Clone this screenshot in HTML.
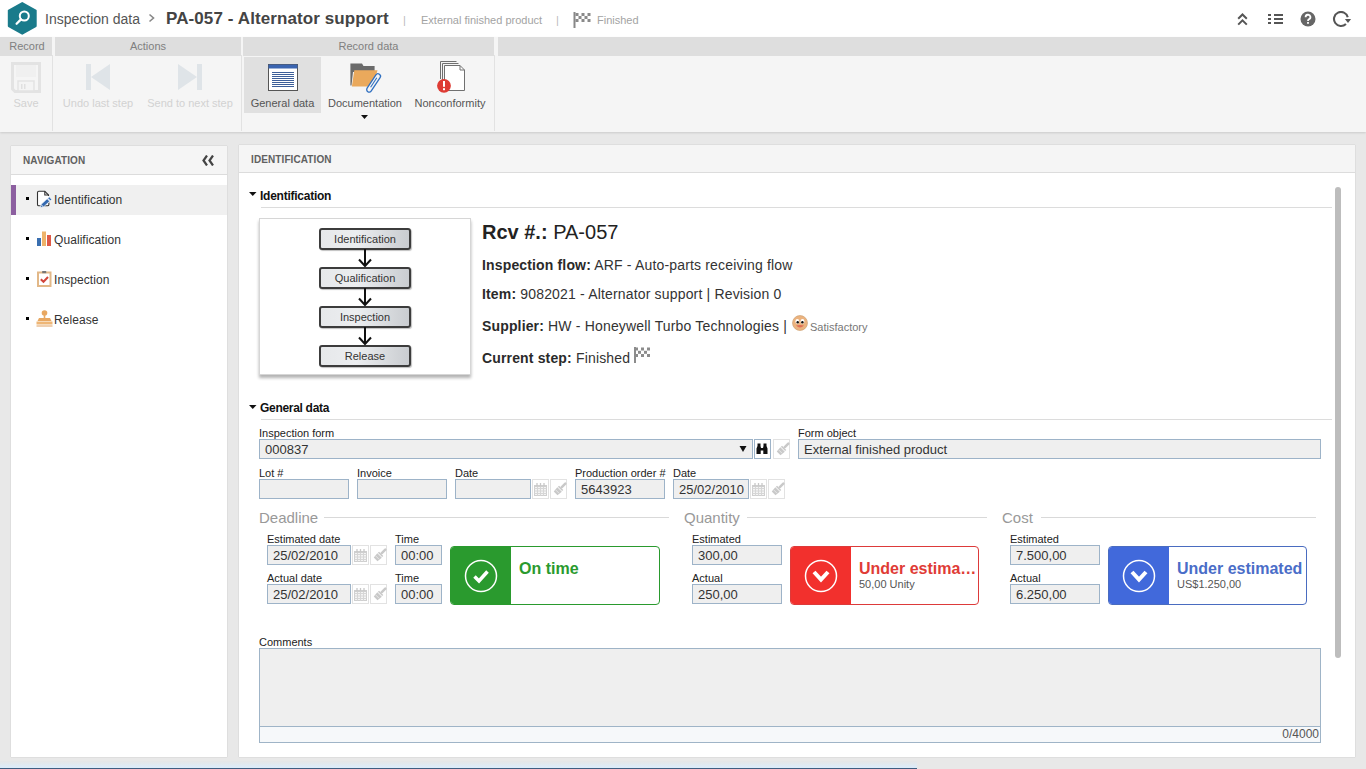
<!DOCTYPE html>
<html><head><meta charset="utf-8">
<style>
*{box-sizing:border-box;margin:0;padding:0}
html,body{width:1366px;height:769px;overflow:hidden;background:#e8e8e8;font-family:"Liberation Sans",sans-serif;color:#333}
.abs{position:absolute}
#hdr{position:absolute;left:0;top:0;width:1366px;height:37px;background:#fff}
#tb{position:absolute;left:0;top:37px;width:1366px;height:95px;background:#f5f5f5;box-shadow:0 1px 2px rgba(0,0,0,0.12)}
.tgh{position:absolute;top:0;height:19px;background:#dedede;color:#808080;font-size:11px;text-align:center;line-height:18px}
.tsep{position:absolute;top:18px;width:1px;height:76px;background:#e2e2e2}
.tbtn{position:absolute;top:18px;height:57px;font-size:11px;text-align:center;color:#444}
.tbtn.dis{color:#c8c8c8}
.panel{position:absolute;background:#fff;box-shadow:0 0 1px rgba(0,0,0,0.25)}
.ph{position:absolute;left:0;top:0;right:0;height:28px;background:#f5f5f5;border-bottom:1px solid #dcdcdc;font-size:10px;font-weight:bold;color:#606060;line-height:28px;padding-left:12px;letter-spacing:0.1px}
.nav{position:absolute;left:0;width:216px;height:30px;font-size:12px;color:#333;line-height:30px}
.nav .b{position:absolute;left:15px;top:12px;width:3px;height:3px;background:#000}
.nav .t{position:absolute;left:43px;top:0;letter-spacing:0.07px}
.lbl{position:absolute;font-size:11px;color:#222}
.inp{position:absolute;height:19px;background:#efefef;border:1px solid #9db3c8;font-size:13px;color:#333;line-height:19px;padding-left:5px}
.sec{position:absolute;font-size:15px;color:#999}
.secl{position:absolute;height:1px;background:#d9d9d9}
.fbox{position:absolute;left:319px;width:92px;height:22px;border:2px solid #3c3c3c;border-radius:3px;background:linear-gradient(90deg,#e6e8ea,#eceef0 40%,#c9ccd0);font-size:11px;color:#333;text-align:center;line-height:19px;box-shadow:1px 1px 1px rgba(0,0,0,0.25)}
.itxt{position:absolute;left:482px;font-size:14px;color:#333;white-space:nowrap;letter-spacing:0.17px}
.itxt b{color:#2a2a2a;letter-spacing:0.15px}
.abtn{position:absolute;width:17px;height:20px;border:1px solid #e2e2e2;background:#fff}
.card{position:absolute;height:59px;border:1px solid;border-radius:4px;background:#fff;overflow:hidden}
.cl{position:absolute;left:0;top:0;bottom:0}
.ct{position:absolute;left:68px;top:13px;font-size:16px;font-weight:bold;white-space:nowrap}
.cs{position:absolute;left:68px;top:31px;font-size:11px;color:#555;white-space:nowrap}
</style></head><body>
<div id="hdr">
  <svg class="abs" style="left:0;top:0" width="45" height="37" viewBox="0 0 45 37">
    <polygon points="22.25,3 35.7,10.6 35.7,26.1 22.25,33.7 8.8,26.1 8.8,10.6" fill="#1a7b8b" stroke="#1a7b8b" stroke-width="2" stroke-linejoin="round"/>
    <circle cx="24.3" cy="16" r="4.5" fill="none" stroke="#fff" stroke-width="2"/>
    <line x1="21" y1="19.4" x2="16.6" y2="23.8" stroke="#fff" stroke-width="2.3" stroke-linecap="round"/>
  </svg>
  <div class="abs" style="left:45px;top:11px;font-size:14px;color:#555">Inspection data</div>
  <svg class="abs" style="left:148px;top:13px" width="8" height="10" viewBox="0 0 8 10"><path d="M1.5,1.5 L5.5,5 L1.5,8.5" fill="none" stroke="#888" stroke-width="1.6"/></svg>
  <div class="abs" style="left:166px;top:9px;font-size:17px;font-weight:bold;color:#444;letter-spacing:0.1px">PA-057 - Alternator support</div>
  <div class="abs" style="left:403px;top:14px;font-size:11px;color:#bbb">|</div>
  <div class="abs" style="left:421px;top:14px;font-size:11px;color:#a3a3a3">External finished product</div>
  <div class="abs" style="left:556px;top:14px;font-size:11px;color:#bbb">|</div>
  <svg class="abs" style="left:573px;top:12px" width="18" height="16" viewBox="0 0 18 16">
    <rect x="0.5" y="0" width="2" height="16" fill="#888"/>
    <g fill="#8a8a8a"><rect x="2.5" y="1" width="3" height="3"/><rect x="8.5" y="1" width="3" height="3"/><rect x="14.5" y="1" width="3" height="3"/>
    <rect x="5.5" y="4" width="3" height="3"/><rect x="11.5" y="4" width="3" height="3"/>
    <rect x="2.5" y="7" width="3" height="3"/><rect x="8.5" y="7" width="3" height="3"/><rect x="14.5" y="7" width="3" height="3"/></g>
  </svg>
  <div class="abs" style="left:597px;top:14px;font-size:11px;color:#a3a3a3">Finished</div>
  <svg class="abs" style="left:1237px;top:12px" width="11" height="14" viewBox="0 0 11 14">
    <path d="M1.2,6.8 L5.5,2.5 L9.8,6.8 M1.2,12.6 L5.5,8.3 L9.8,12.6" fill="none" stroke="#555" stroke-width="2"/>
  </svg>
  <svg class="abs" style="left:1268px;top:14px" width="15" height="10" viewBox="0 0 15 10">
    <g fill="#555"><rect x="0" y="0" width="3" height="2"/><rect x="0" y="4" width="3" height="2"/><rect x="0" y="8" width="3" height="2"/>
    <rect x="6" y="0" width="9" height="2"/><rect x="6" y="4" width="9" height="2"/><rect x="6" y="8" width="9" height="2"/></g>
  </svg>
  <svg class="abs" style="left:1300px;top:11px" width="16" height="16" viewBox="0 0 16 16">
    <circle cx="8" cy="8" r="7.5" fill="#666"/>
    <path d="M5.6,6.2 A2.4,2.4 0 1 1 8.8,8.4 Q8,8.8 8,10" fill="none" stroke="#fff" stroke-width="1.8"/>
    <rect x="7.1" y="11" width="1.8" height="1.8" fill="#fff"/>
  </svg>
  <svg class="abs" style="left:1332px;top:11px" width="20" height="17" viewBox="0 0 20 17">
    <path d="M13.95,12.95 A7,7 0 1 1 15.76,6.19" fill="none" stroke="#555" stroke-width="2.1"/>
    <polygon points="12.9,8 19.1,8 16,12" fill="#555"/>
  </svg>
</div>
<div id="tb">
  <div class="tgh" style="left:0;width:52px;padding-left:2px">Record</div>
  <div class="tgh" style="left:55px;width:186px">Actions</div>
  <div class="tgh" style="left:243px;width:251px">Record data</div>
  <div class="tgh" style="left:498px;width:868px"></div>
  <div class="tsep" style="left:52px"></div>
  <div class="tsep" style="left:241px"></div>
  <div class="tsep" style="left:494px"></div>
  <!-- Save -->
  <svg class="abs" style="left:11px;top:25px" width="30" height="31" viewBox="0 0 30 31">
    <path d="M1.5,1.5 H28.5 V29.5 H4 L1.5,27 Z" fill="none" stroke="#e3e3e3" stroke-width="3"/>
    <rect x="5" y="3" width="20" height="12" fill="#f0f0f0"/>
    <rect x="7" y="19" width="16" height="10" fill="#f4f4f4" stroke="#e3e3e3" stroke-width="1.5"/>
    <rect x="10" y="22" width="1.5" height="5" fill="#e0e0e0"/><rect x="13" y="22" width="1.5" height="5" fill="#e0e0e0"/>
  </svg>
  <div class="abs" style="left:0;width:52px;top:60px;font-size:11px;color:#d2d2d2;text-align:center">Save</div>
  <!-- Undo -->
  <svg class="abs" style="left:86px;top:27px" width="25" height="26" viewBox="0 0 25 26">
    <rect x="0" y="0" width="5" height="26" fill="#dfe4e8"/>
    <polygon points="24,0 24,26 5,13" fill="#dfe4e8"/>
  </svg>
  <div class="abs" style="left:58px;width:80px;top:60px;font-size:11px;color:#d2d2d2;text-align:center">Undo last step</div>
  <svg class="abs" style="left:178px;top:27px" width="24" height="26" viewBox="0 0 24 26">
    <polygon points="0,0 0,26 19,13" fill="#dfe4e8"/>
    <rect x="19" y="0" width="5" height="26" fill="#dfe4e8"/>
  </svg>
  <div class="abs" style="left:143px;width:94px;top:60px;font-size:11px;color:#d2d2d2;text-align:center">Send to next step</div>
  <!-- General data -->
  <div class="abs" style="left:244px;top:20px;width:77px;height:56px;background:#e0e0e0"></div>
  <svg class="abs" style="left:268px;top:27px" width="30" height="27" viewBox="0 0 30 27">
    <rect x="0.5" y="0.5" width="29" height="26" fill="#fff" stroke="#555" stroke-width="1"/>
    <rect x="0.5" y="0.5" width="29" height="4" fill="#3a64b0"/>
    <g fill="#3d5f99"><rect x="4" y="8" width="22" height="1"/><rect x="4" y="10" width="22" height="1"/><rect x="4" y="12" width="22" height="1"/><rect x="4" y="14" width="22" height="1"/><rect x="4" y="16" width="22" height="1"/><rect x="4" y="18" width="22" height="1"/><rect x="4" y="20" width="22" height="1"/><rect x="4" y="22" width="22" height="1"/></g>
  </svg>
  <div class="abs" style="left:244px;width:77px;top:60px;font-size:11px;color:#555;text-align:center">General data</div>
  <!-- Documentation -->
  <svg class="abs" style="left:349px;top:25px" width="34" height="32" viewBox="0 0 34 32">
    <path d="M1.4,1.4 H13 L14.5,4 H25.6 V10 H4 L2.5,23.6 H1.4 Z" fill="#6b6b6b"/>
    <path d="M5.3,8.3 H28.5 L24,24.6 H2.9 Z" fill="#eaa95c"/>
    <path d="M22.29,28.98 L31.09,15.68 A2.5,2.5 0 0 0 26.92,12.92 L18.12,26.22 A2.5,2.5 0 0 0 22.29,28.98 Z" fill="#f5f5f5" stroke="#2f6fc0" stroke-width="1.3"/>
    <path d="M21.6,25.2 L27.8,15.8" fill="none" stroke="#2f6fc0" stroke-width="1.1"/>
  </svg>
  <div class="abs" style="left:323px;width:84px;top:60px;font-size:11px;color:#555;text-align:center">Documentation</div>
  <svg class="abs" style="left:361px;top:78px" width="7" height="4" viewBox="0 0 7 4"><polygon points="0,0 7,0 3.5,4" fill="#111"/></svg>
  <!-- Nonconformity -->
  <svg class="abs" style="left:437px;top:23px" width="30" height="34" viewBox="0 0 30 34">
    <path d="M3.5,19 V1.5 H19.5" fill="none" stroke="#707070" stroke-width="1"/>
    <path d="M5.5,20 V3.5 H21.5" fill="none" stroke="#707070" stroke-width="1"/>
    <path d="M7.5,5.5 H23 L27.5,10 V30.5 H7.5 Z" fill="#fff" stroke="#707070" stroke-width="1"/>
    <path d="M23,5.5 V10 H27.5" fill="none" stroke="#707070" stroke-width="1"/>
    <circle cx="7" cy="25.8" r="6.9" fill="#de3c34"/>
    <rect x="6" y="21" width="2" height="5.8" fill="#fff"/><rect x="6" y="28.2" width="2" height="2" fill="#fff"/>
  </svg>
  <div class="abs" style="left:410px;width:80px;top:60px;font-size:11px;color:#555;text-align:center">Nonconformity</div>
</div>
<div class="panel" style="left:11px;top:146px;width:216px;height:611px">
  <div class="ph" style="height:29px;line-height:29px">NAVIGATION</div>
  <svg class="abs" style="left:191px;top:9px" width="12" height="11" viewBox="0 0 12 11">
    <path d="M5,0.5 L1.5,5.5 L5,10.5 M11,0.5 L7.5,5.5 L11,10.5" fill="none" stroke="#444" stroke-width="2.2"/>
  </svg>
  <div class="nav" style="top:39px;background:#f0f0f0"><div class="abs" style="left:0;top:0;width:5px;height:30px;background:#8c5fa0"></div><div class="b"></div><div class="t">Identification</div>
    <svg class="abs" style="left:25px;top:5px" width="18" height="18" viewBox="0 0 18 18">
      <path d="M12.9,12.5 V14.5 Q12.9,15.8 11.6,15.8 H2.8 Q1.5,15.8 1.5,14.5 V2.6 Q1.5,1.3 2.8,1.3 H8.8 L12.5,5 V6" fill="#fff" stroke="#333" stroke-width="1.1"/>
      <path d="M8.8,1.3 V5 H12.5" fill="none" stroke="#333" stroke-width="1.1"/>
      <g stroke="#f4f8fc" stroke-width="0.7" transform="translate(-0.7,0.9)">
      <polygon points="8.12,16.21 14.32,10.41 11.88,7.79 5.68,13.59" fill="#3469b0"/>
      <polygon points="5.68,13.59 8.12,16.21 5.07,16.6" fill="#3469b0"/>
      <polygon points="14.92,9.88 16.39,8.51 13.95,5.89 12.48,7.26" fill="#3469b0"/>
      </g>
    </svg></div>
  <div class="nav" style="top:79px"><div class="b"></div><div class="t">Qualification</div>
    <svg class="abs" style="left:26px;top:5px" width="15" height="16" viewBox="0 0 15 16">
      <rect x="0" y="8" width="4" height="8" fill="#3a6fb0"/>
      <rect x="5" y="1.5" width="4" height="14.5" fill="#eeb36a"/>
      <rect x="10" y="5" width="4" height="11" fill="#de5a48"/>
    </svg></div>
  <div class="nav" style="top:119px"><div class="b"></div><div class="t">Inspection</div>
    <svg class="abs" style="left:26px;top:5px" width="15" height="17" viewBox="0 0 15 17">
      <rect x="1" y="2.5" width="12.5" height="13.5" fill="#fff" stroke="#e2b888" stroke-width="2"/>
      <rect x="5.2" y="1" width="4" height="2.2" fill="#777"/>
      <path d="M3.8,9.2 L6.5,11.8 L11,7" fill="none" stroke="#d2463c" stroke-width="2"/>
    </svg></div>
  <div class="nav" style="top:159px"><div class="b"></div><div class="t">Release</div>
    <svg class="abs" style="left:25px;top:5px" width="17" height="17" viewBox="0 0 17 17">
      <circle cx="8.5" cy="3" r="2.8" fill="#e8a862"/>
      <rect x="7.7" y="5" width="1.6" height="3.5" fill="#e8a862"/>
      <path d="M3,8 H14 L15.5,11 H1.5 Z" fill="#e8a862"/>
      <rect x="0.5" y="11.5" width="16" height="3" fill="#eeb676"/>
      <rect x="0.5" y="15.5" width="16" height="1" fill="#e0a060"/>
    </svg></div>
</div>
<div class="panel" style="left:239px;top:145px;width:1116px;height:612px">
  <div class="ph" style="height:28px;line-height:30px">IDENTIFICATION</div>
</div>
<div id="main">
  <!-- scrollbar -->
  <div class="abs" style="left:1335px;top:187px;width:6px;height:471px;background:#bdbdbd;border-radius:3px"></div>
  <!-- Identification section -->
  <svg class="abs" style="left:249px;top:192px" width="8" height="4" viewBox="0 0 8 4"><polygon points="0,0 7.5,0 3.75,4" fill="#111"/></svg>
  <div class="abs" style="left:260px;top:189px;font-size:12px;font-weight:bold;color:#111;letter-spacing:-0.25px">Identification</div>
  <div class="abs" style="left:261px;top:207px;width:1071px;height:1px;background:#dcdcdc"></div>
  <!-- diagram -->
  <div class="abs" style="left:259px;top:218px;width:212px;height:157px;background:#fff;border:1px solid #d6d6d6;box-shadow:0 3px 3px rgba(0,0,0,0.3)"></div>
  <div class="fbox" style="top:228px">Identification</div>
  <div class="fbox" style="top:267px">Qualification</div>
  <div class="fbox" style="top:306px">Inspection</div>
  <div class="fbox" style="top:345px">Release</div>
  <svg class="abs" style="left:357px;top:249px" width="16" height="100" viewBox="0 0 16 100">
    <g fill="none" stroke="#111" stroke-width="2">
      <path d="M8,0 V17 M2,10.5 L8,17 L14,10.5"/>
      <path d="M8,39 V56 M2,49.5 L8,56 L14,49.5"/>
      <path d="M8,78 V95 M2,88.5 L8,95 L14,88.5"/>
    </g>
  </svg>
  <div class="abs" style="left:482px;top:221px;font-size:20px;color:#222;white-space:nowrap"><b>Rcv #.:</b> PA-057</div>
  <div class="itxt" style="top:257px"><b>Inspection flow:</b> ARF - Auto-parts receiving flow</div>
  <div class="itxt" style="top:286px"><b>Item:</b> 9082021 - Alternator support | Revision 0</div>
  <div class="itxt" style="top:318px"><b>Supplier:</b> HW - Honeywell Turbo Technologies | <span style="display:inline-block;width:19px"></span><span style="font-size:11px;color:#777;letter-spacing:0">Satisfactory</span></div>
  <div class="itxt" style="top:350px"><b>Current step:</b> Finished</div>
  <!-- smiley -->
  <svg class="abs" style="left:792px;top:315px" width="16" height="16" viewBox="0 0 16 16">
    <circle cx="8" cy="8" r="7.5" fill="#ebb37f" stroke="#c99a6a" stroke-width="0.6"/>
    <ellipse cx="5.3" cy="6.4" rx="1.9" ry="2.3" fill="#fff"/><ellipse cx="10.5" cy="6.4" rx="1.9" ry="2.3" fill="#fff"/>
    <circle cx="5.7" cy="7.2" r="1.2" fill="#111"/><circle cx="10.4" cy="7.2" r="1.2" fill="#111"/>
    <path d="M4,10.5 Q8,9.5 12,10.5 Q8,14.5 4,10.5 Z" fill="#e06f55"/>
  </svg>
  <!-- flag small -->
  <svg class="abs" style="left:634px;top:347px" width="17" height="16" viewBox="0 0 17 16">
    <rect x="0" y="0" width="2" height="16" fill="#8c8c8c"/>
    <g fill="#8c8c8c"><rect x="2" y="0.5" width="2" height="3"/><rect x="7" y="0.5" width="3" height="3"/><rect x="13" y="0.5" width="3" height="3"/>
    <rect x="4" y="3.8" width="3" height="3"/><rect x="10" y="3.8" width="3" height="3"/>
    <rect x="2" y="7" width="2" height="3"/><rect x="7" y="7" width="3" height="3"/><rect x="13" y="7" width="3" height="3"/></g>
  </svg>
  <!-- General data -->
  <svg class="abs" style="left:249px;top:405px" width="8" height="4" viewBox="0 0 8 4"><polygon points="0,0 7.5,0 3.75,4" fill="#111"/></svg>
  <div class="abs" style="left:260px;top:401px;font-size:12px;font-weight:bold;color:#111;letter-spacing:-0.3px">General data</div>
  <div class="abs" style="left:261px;top:419px;width:1071px;height:1px;background:#dcdcdc"></div>

  <div class="lbl" style="left:259px;top:427px">Inspection form</div>
  <div class="inp" style="left:259px;top:439px;width:494px;height:20px">000837</div>
  <svg class="abs" style="left:739px;top:445px" width="8" height="8" viewBox="0 0 8 8"><polygon points="0.5,1 7.5,1 4,7" fill="#111"/></svg>
  <div class="abtn" style="left:754px;top:439px;border-color:#9db3c8"></div>
  <svg class="abs" style="left:756px;top:443px" width="12" height="12" viewBox="0 0 12 12"><path d="M0.5,11 V5.5 L1.5,3 V0.5 H4.5 V3 L5,5 H7 L7.5,3 V0.5 H10.5 V3 L11.5,5.5 V11 H7.3 V7.5 H4.7 V11 Z" fill="#111"/></svg>
  <div class="abtn" style="left:773px;top:439px"><svg style="position:absolute;left:1px;top:2px" width="15" height="15" viewBox="0 0 15 15"><path d="M13.3,1.7 L9.8,5.2" stroke="#c9c9c9" stroke-width="2.5" stroke-linecap="round"/><polygon points="10.15,9.09 11.29,7.95 7.05,3.71 5.91,4.85" fill="#c9c9c9"/><polygon points="9.84,9.68 5.46,13.22 1.78,9.54 5.32,5.16" fill="#c9c9c9"/><path d="M3.9,8.1 L6.9,11.1" stroke="#f0f0f0" stroke-width="0.8"/></svg></div>
  <div class="lbl" style="left:798px;top:427px">Form object</div>
  <div class="inp" style="left:798px;top:439px;width:523px;height:20px">External finished product</div>

  <div class="lbl" style="left:259px;top:467px">Lot #</div>
  <div class="inp" style="left:259px;top:479px;width:90px;height:20px"></div>
  <div class="lbl" style="left:357px;top:467px">Invoice</div>
  <div class="inp" style="left:357px;top:479px;width:90px;height:20px"></div>
  <div class="lbl" style="left:455px;top:467px">Date</div>
  <div class="inp" style="left:455px;top:479px;width:76px;height:20px"></div>
  <div class="abtn cal" style="left:532px;top:479px"><svg style="position:absolute;left:0px;top:2px" width="15" height="14" viewBox="0 0 15 14"><rect x="1.5" y="3.5" width="12" height="10" fill="#f4f4f4" stroke="#cfcfcf" stroke-width="1"/><path d="M1.5,6.5 H13.5 M1.5,9 H13.5 M1.5,11.5 H13.5 M4.5,3.5 V13.5 M7.5,3.5 V13.5 M10.5,3.5 V13.5" stroke="#d6d6d6" stroke-width="1"/><rect x="1.5" y="3" width="12" height="2" fill="#cfcfcf"/><path d="M4,1 V4 M7.5,1 V4 M11,1 V4" stroke="#c8c8c8" stroke-width="1.3"/></svg></div>
  <div class="abtn" style="left:550px;top:479px"><svg style="position:absolute;left:1px;top:2px" width="15" height="15" viewBox="0 0 15 15"><path d="M13.3,1.7 L9.8,5.2" stroke="#c9c9c9" stroke-width="2.5" stroke-linecap="round"/><polygon points="10.15,9.09 11.29,7.95 7.05,3.71 5.91,4.85" fill="#c9c9c9"/><polygon points="9.84,9.68 5.46,13.22 1.78,9.54 5.32,5.16" fill="#c9c9c9"/><path d="M3.9,8.1 L6.9,11.1" stroke="#f0f0f0" stroke-width="0.8"/></svg></div>
  <div class="lbl" style="left:575px;top:467px">Production order #</div>
  <div class="inp" style="left:575px;top:479px;width:90px;height:20px">5643923</div>
  <div class="lbl" style="left:673px;top:467px">Date</div>
  <div class="inp" style="left:673px;top:479px;width:76px;height:20px">25/02/2010</div>
  <div class="abtn cal" style="left:750px;top:479px"><svg style="position:absolute;left:0px;top:2px" width="15" height="14" viewBox="0 0 15 14"><rect x="1.5" y="3.5" width="12" height="10" fill="#f4f4f4" stroke="#cfcfcf" stroke-width="1"/><path d="M1.5,6.5 H13.5 M1.5,9 H13.5 M1.5,11.5 H13.5 M4.5,3.5 V13.5 M7.5,3.5 V13.5 M10.5,3.5 V13.5" stroke="#d6d6d6" stroke-width="1"/><rect x="1.5" y="3" width="12" height="2" fill="#cfcfcf"/><path d="M4,1 V4 M7.5,1 V4 M11,1 V4" stroke="#c8c8c8" stroke-width="1.3"/></svg></div>
  <div class="abtn" style="left:768px;top:479px"><svg style="position:absolute;left:1px;top:2px" width="15" height="15" viewBox="0 0 15 15"><path d="M13.3,1.7 L9.8,5.2" stroke="#c9c9c9" stroke-width="2.5" stroke-linecap="round"/><polygon points="10.15,9.09 11.29,7.95 7.05,3.71 5.91,4.85" fill="#c9c9c9"/><polygon points="9.84,9.68 5.46,13.22 1.78,9.54 5.32,5.16" fill="#c9c9c9"/><path d="M3.9,8.1 L6.9,11.1" stroke="#f0f0f0" stroke-width="0.8"/></svg></div>

  <!-- Deadline -->
  <div class="sec" style="left:259px;top:509px">Deadline</div>
  <div class="secl" style="left:324px;top:517px;width:345px"></div>
  <div class="lbl" style="left:267px;top:533px">Estimated date</div>
  <div class="inp" style="left:267px;top:545px;width:84px;height:20px">25/02/2010</div>
  <div class="abtn cal" style="left:352px;top:545px"><svg style="position:absolute;left:0px;top:2px" width="15" height="14" viewBox="0 0 15 14"><rect x="1.5" y="3.5" width="12" height="10" fill="#f4f4f4" stroke="#cfcfcf" stroke-width="1"/><path d="M1.5,6.5 H13.5 M1.5,9 H13.5 M1.5,11.5 H13.5 M4.5,3.5 V13.5 M7.5,3.5 V13.5 M10.5,3.5 V13.5" stroke="#d6d6d6" stroke-width="1"/><rect x="1.5" y="3" width="12" height="2" fill="#cfcfcf"/><path d="M4,1 V4 M7.5,1 V4 M11,1 V4" stroke="#c8c8c8" stroke-width="1.3"/></svg></div>
  <div class="abtn" style="left:370px;top:545px"><svg style="position:absolute;left:1px;top:2px" width="15" height="15" viewBox="0 0 15 15"><path d="M13.3,1.7 L9.8,5.2" stroke="#c9c9c9" stroke-width="2.5" stroke-linecap="round"/><polygon points="10.15,9.09 11.29,7.95 7.05,3.71 5.91,4.85" fill="#c9c9c9"/><polygon points="9.84,9.68 5.46,13.22 1.78,9.54 5.32,5.16" fill="#c9c9c9"/><path d="M3.9,8.1 L6.9,11.1" stroke="#f0f0f0" stroke-width="0.8"/></svg></div>
  <div class="lbl" style="left:395px;top:533px">Time</div>
  <div class="inp" style="left:395px;top:545px;width:47px;height:20px">00:00</div>
  <div class="lbl" style="left:267px;top:572px">Actual date</div>
  <div class="inp" style="left:267px;top:584px;width:84px;height:20px">25/02/2010</div>
  <div class="abtn cal" style="left:352px;top:584px"><svg style="position:absolute;left:0px;top:2px" width="15" height="14" viewBox="0 0 15 14"><rect x="1.5" y="3.5" width="12" height="10" fill="#f4f4f4" stroke="#cfcfcf" stroke-width="1"/><path d="M1.5,6.5 H13.5 M1.5,9 H13.5 M1.5,11.5 H13.5 M4.5,3.5 V13.5 M7.5,3.5 V13.5 M10.5,3.5 V13.5" stroke="#d6d6d6" stroke-width="1"/><rect x="1.5" y="3" width="12" height="2" fill="#cfcfcf"/><path d="M4,1 V4 M7.5,1 V4 M11,1 V4" stroke="#c8c8c8" stroke-width="1.3"/></svg></div>
  <div class="abtn" style="left:370px;top:584px"><svg style="position:absolute;left:1px;top:2px" width="15" height="15" viewBox="0 0 15 15"><path d="M13.3,1.7 L9.8,5.2" stroke="#c9c9c9" stroke-width="2.5" stroke-linecap="round"/><polygon points="10.15,9.09 11.29,7.95 7.05,3.71 5.91,4.85" fill="#c9c9c9"/><polygon points="9.84,9.68 5.46,13.22 1.78,9.54 5.32,5.16" fill="#c9c9c9"/><path d="M3.9,8.1 L6.9,11.1" stroke="#f0f0f0" stroke-width="0.8"/></svg></div>
  <div class="lbl" style="left:395px;top:572px">Time</div>
  <div class="inp" style="left:395px;top:584px;width:47px;height:20px">00:00</div>
  <div class="card" style="left:450px;top:546px;width:210px;border-color:#2a9a2e">
    <div class="cl" style="width:60px;background:#2a9a2e"></div>
    <div class="ct" style="color:#2a9a2e;top:13px">On time</div>
  </div>
  <svg class="abs" style="left:464px;top:559px" width="34" height="34" viewBox="0 0 34 34">
    <circle cx="17" cy="17" r="15.5" fill="none" stroke="#fff" stroke-width="1.5"/>
    <path d="M10.5,17.5 L15,22 L23.5,12.5" fill="none" stroke="#fff" stroke-width="3.5"/>
  </svg>

  <!-- Quantity -->
  <div class="sec" style="left:684px;top:509px">Quantity</div>
  <div class="secl" style="left:747px;top:517px;width:240px"></div>
  <div class="lbl" style="left:692px;top:533px">Estimated</div>
  <div class="inp" style="left:692px;top:545px;width:90px;height:20px">300,00</div>
  <div class="lbl" style="left:692px;top:572px">Actual</div>
  <div class="inp" style="left:692px;top:584px;width:90px;height:20px">250,00</div>
  <div class="card" style="left:790px;top:546px;width:189px;border-color:#dd3a3a">
    <div class="cl" style="width:60px;background:#f2302d"></div>
    <div class="ct" style="color:#e03b36">Under estima&hellip;</div>
    <div class="cs">50,00 Unity</div>
  </div>
  <svg class="abs" style="left:804px;top:559px" width="34" height="34" viewBox="0 0 34 34">
    <circle cx="17" cy="17" r="15.5" fill="none" stroke="#fff" stroke-width="1.5"/>
    <path d="M10,13 L17,20.5 L24,13" fill="none" stroke="#fff" stroke-width="4"/>
  </svg>

  <!-- Cost -->
  <div class="sec" style="left:1002px;top:509px">Cost</div>
  <div class="secl" style="left:1041px;top:517px;width:275px"></div>
  <div class="lbl" style="left:1010px;top:533px">Estimated</div>
  <div class="inp" style="left:1010px;top:545px;width:90px;height:20px">7.500,00</div>
  <div class="lbl" style="left:1010px;top:572px">Actual</div>
  <div class="inp" style="left:1010px;top:584px;width:90px;height:20px">6.250,00</div>
  <div class="card" style="left:1108px;top:546px;width:199px;border-color:#4a6cc0">
    <div class="cl" style="width:60px;background:#4169db"></div>
    <div class="ct" style="color:#4a6dc8">Under estimated</div>
    <div class="cs">US$1.250,00</div>
  </div>
  <svg class="abs" style="left:1122px;top:559px" width="34" height="34" viewBox="0 0 34 34">
    <circle cx="17" cy="17" r="15.5" fill="none" stroke="#fff" stroke-width="1.5"/>
    <path d="M10,13 L17,20.5 L24,13" fill="none" stroke="#fff" stroke-width="4"/>
  </svg>

  <!-- Comments -->
  <div class="lbl" style="left:259px;top:636px">Comments</div>
  <div class="abs" style="left:259px;top:648px;width:1062px;height:95px;background:#efefef;border:1px solid #9fb4c7"></div>
  <div class="abs" style="left:260px;top:726px;width:1060px;height:16px;background:#f6f8fa;border-top:1px solid #9fb4c7"></div>
  <div class="abs" style="left:1200px;top:726px;width:119px;text-align:right;font-size:12px;color:#555;line-height:16px">0/4000</div>
</div>
<!-- bottom progress bar -->
<div class="abs" style="left:0;top:761px;width:917px;height:8px;background:linear-gradient(#e6e6e6 0%,#dcecfa 84%,#3f5d80 84%,#3f5d80 100%)"></div>
</body></html>
